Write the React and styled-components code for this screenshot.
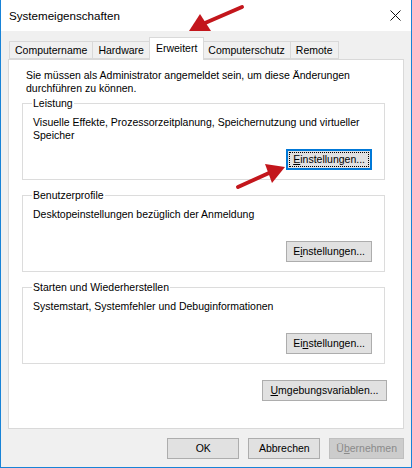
import React from "react";
import styled, { createGlobalStyle } from "styled-components";

const GlobalStyle = createGlobalStyle`
  html, body {
    margin: 0;
    padding: 0;
    background: #f0f0f0;
  }
  * {
    box-sizing: border-box;
  }
`;

const Window = styled.div`
  position: relative;
  width: 412px;
  height: 468px;
  border: 1px solid #1883d7;
  border-top: none;
  background: #f0f0f0;
  font-family: "Liberation Sans", Arial, sans-serif;
  font-size: 10.5px;
  color: #000;
  display: flex;
  flex-direction: column;
  overflow: hidden;
`;

const TitleBar = styled.div`
  height: 31px;
  background: #fff;
  display: flex;
  align-items: center;
  justify-content: space-between;
  padding: 0 4px 0 8px;
  font-size: 11.6px;
`;

const CloseButton = styled.div`
  width: 24px;
  height: 24px;
  display: flex;
  align-items: center;
  justify-content: center;
`;

const Body = styled.div`
  flex: 1;
  padding: 6px 7px 0 7px;
  display: flex;
  flex-direction: column;
`;

const TabRow = styled.div`
  display: flex;
  align-items: flex-end;
  height: 22px;
  padding-left: 1px;
  position: relative;
  z-index: 1;
`;

const Tab = styled.div`
  height: ${(p) => (p.$active ? "23px" : "18px")};
  padding: ${(p) => (p.$active ? "3px 6px 0" : "1px 5px 0")};
  margin: ${(p) => (p.$active ? "0 -1px -1px -1px" : "0")};
  border: 1px solid #d9d9d9;
  border-bottom: ${(p) => (p.$active ? "none" : "1px solid #d9d9d9")};
  border-left: ${(p) => (p.$first || p.$active ? "1px solid #d9d9d9" : "none")};
  background: ${(p) => (p.$active ? "#fff" : "#f0f0f0")};
  line-height: 15px;
  white-space: nowrap;
  position: relative;
  z-index: ${(p) => (p.$active ? 2 : 0)};
`;

const Panel = styled.div`
  background: #fff;
  border: 1px solid #d9d9d9;
  height: 370px;
  padding: 9px 18px 0 13px;
  display: flex;
  flex-direction: column;
`;

const Intro = styled.p`
  margin: 0 0 1px;
  padding-left: 4px;
  line-height: 13px;
`;

const Group = styled.fieldset`
  margin: 0 0 8px;
  padding: 0 12px 9px 9px;
  border: 1px solid #dcdcdc;
  min-width: 0;
`;

const Legend = styled.legend`
  padding: 0 1px;
  line-height: 14px;
`;

const GroupBody = styled.div`
  height: 60px;
  padding-top: 6px;
  display: flex;
  flex-direction: column;
  padding-left: 1px;
`;

const GroupText = styled.div`
  line-height: 13px;
`;

const Button = styled.button`
  all: unset;
  box-sizing: border-box;
  height: 21px;
  min-width: ${(p) => p.$width || "82px"};
  padding: 0 6px;
  font-family: "Liberation Sans", Arial, sans-serif;
  font-size: 10.5px;
  text-align: center;
  line-height: 19px;
  color: ${(p) => (p.$disabled ? "#8a8a8a" : "#000")};
  background: ${(p) => (p.$disabled ? "#cccccc" : "#e1e1e1")};
  border: 1px solid
    ${(p) => (p.$focused ? "#0078d7" : p.$disabled ? "#bfbfbf" : "#adadad")};
  box-shadow: ${(p) => (p.$focused ? "inset 0 0 0 1px #0078d7" : "none")};
  position: relative;
  u {
    text-decoration: underline;
    text-underline-offset: 1px;
  }
`;

const FocusRing = styled.span`
  position: absolute;
  inset: 2px;
  border: 1px dotted #000;
  pointer-events: none;
`;

const GroupButton = styled(Button)`
  align-self: flex-end;
  margin-top: auto;
`;

const EnvRow = styled.div`
  display: flex;
  justify-content: flex-end;
  margin: 8px -2px 0 0;
`;

const Footer = styled.div`
  display: flex;
  justify-content: flex-end;
  gap: 9px;
  padding: 9px 0 0;
`;

const Annotation = styled.svg`
  position: absolute;
  left: 0;
  top: 0;
  pointer-events: none;
`;

const groups = [
  {
    title: "Leistung",
    text: (
      <>
        Visuelle Effekte, Prozessorzeitplanung, Speichernutzung und virtueller
        <br />
        Speicher
      </>
    ),
    label: [<u key="u">E</u>, "instellungen..."],
    focused: true,
  },
  {
    title: "Benutzerprofile",
    text: "Desktopeinstellungen bezüglich der Anmeldung",
    label: ["E", <u key="u">i</u>, "nstellungen..."],
  },
  {
    title: "Starten und Wiederherstellen",
    text: "Systemstart, Systemfehler und Debuginformationen",
    label: ["Ei", <u key="u">n</u>, "stellungen..."],
  },
];

const tabs = ["Computername", "Hardware", "Erweitert", "Computerschutz", "Remote"];

const App = () => {
  return (
    <React.Fragment>
      <GlobalStyle />
      <Window>
        <TitleBar>
          <span>Systemeigenschaften</span>
          <CloseButton>
            <svg width="11" height="11" viewBox="0 0 11 11">
              <path d="M0.5 0.5 L10.5 10.5 M10.5 0.5 L0.5 10.5" stroke="#111" strokeWidth="1" />
            </svg>
          </CloseButton>
        </TitleBar>
        <Body>
          <TabRow>
            {tabs.map((t, idx) => (
              <Tab key={t} $first={idx === 0} $active={t === "Erweitert"}>
                {t}
              </Tab>
            ))}
          </TabRow>
          <Panel>
            <Intro>
              Sie müssen als Administrator angemeldet sein, um diese Änderungen
              <br />
              durchführen zu können.
            </Intro>
            {groups.map((g) => (
              <Group key={g.title}>
                <Legend>{g.title}</Legend>
                <GroupBody>
                  <GroupText>{g.text}</GroupText>
                  <GroupButton $focused={g.focused}>
                    {g.label}
                    {g.focused && <FocusRing />}
                  </GroupButton>
                </GroupBody>
              </Group>
            ))}
            <EnvRow>
              <Button $width="125px">
                <u>U</u>mgebungsvariablen...
              </Button>
            </EnvRow>
          </Panel>
          <Footer>
            <Button $width="72px">OK</Button>
            <Button $width="72px">Abbrechen</Button>
            <Button $width="72px" $disabled>
              Ü<u>b</u>ernehmen
            </Button>
          </Footer>
        </Body>
        <Annotation width="412" height="468" viewBox="0 0 412 468">
          <g fill="#c3161c" stroke="#c3161c" strokeLinecap="round">
            <path d="M241 7 L204 23" strokeWidth="4" />
            <polygon points="188,31 199,14 210,31" stroke="none" />
            <path d="M237 187 L268 173" strokeWidth="4" />
            <polygon points="284,167 264,164 271,183" stroke="none" />
          </g>
        </Annotation>
      </Window>
    </React.Fragment>
  );
};

export default App;
